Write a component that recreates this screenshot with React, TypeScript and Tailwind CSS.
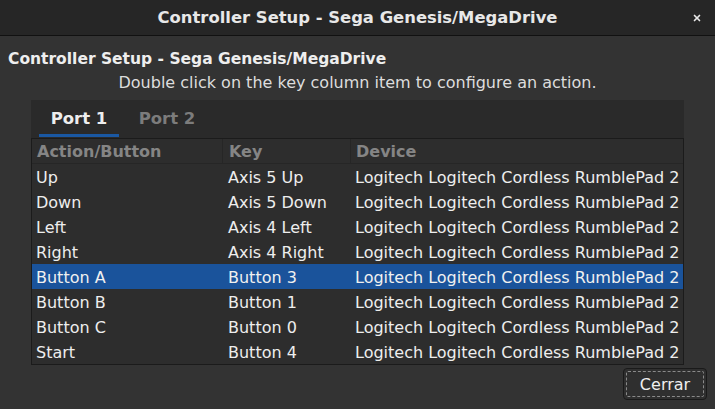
import { X } from 'lucide-react';

const rows = [
    ['Up', 'Axis 5 Up'],
    ['Down', 'Axis 5 Down'],
    ['Left', 'Axis 4 Left'],
    ['Right', 'Axis 4 Right'],
    ['Button A', 'Button 3'],
    ['Button B', 'Button 1'],
    ['Button C', 'Button 0'],
    ['Start', 'Button 4'],
];

const device = 'Logitech Logitech Cordless RumblePad 2';

export default function App() {
    return (
        <div
            className="w-[715px] h-[409px] overflow-hidden flex flex-col bg-[#333333] text-[#eeeeee]"
            style={{ fontFamily: '"DejaVu Sans", sans-serif' }}
        >
            {/* Window title bar */}
            <header className="relative h-[36px] shrink-0 flex items-center justify-center bg-[#262626] border-b border-[#111111]">
                <span className="text-[16.4px] font-bold text-[#e8e8e8] pt-[1px]">
                    Controller Setup - Sega Genesis/MegaDrive
                </span>
                <X className="absolute right-[13px] top-[13px] w-[10px] h-[10px] text-[#e8e8e8]" strokeWidth={4} />
            </header>

            <div className="flex flex-col flex-1">
                <h1 className="pl-[8px] pt-[13px] text-[15.5px] leading-[20px] font-bold">
                    Controller Setup - Sega Genesis/MegaDrive
                </h1>
                <p className="text-center pt-[4px] text-[16px] leading-[20px] text-[#dddddd]">
                    Double click on the key column item to configure an action.
                </p>

                {/* Tab pane */}
                <div className="ml-[31px] w-[653px] mt-[7px] bg-[#2a2a2a]">
                    <div className="flex h-[38px] items-stretch pl-[8px]">
                        <div className="relative w-[80px] flex items-center justify-center text-[16.5px] font-bold text-[#eeeeee]">
                            Port 1
                            <div className="absolute left-0 right-0 bottom-[1px] h-[3px] bg-[#1a58a3]" />
                        </div>
                        <div className="w-[96px] flex items-center justify-center text-[16.5px] font-bold text-[#7c7c7c]">
                            Port 2
                        </div>
                    </div>

                    {/* Table */}
                    <div className="border border-[#1b1b1b] bg-[#2d2d2d]">
                        <div className="grid grid-cols-[191px_128px_1fr] h-[25px] border-b border-[#262626] text-[16px] font-bold text-[#858585]">
                            <div className="pl-[5px] pt-[1px] flex items-center border-r border-[#262626]">Action/Button</div>
                            <div className="pl-[6px] pt-[1px] flex items-center border-r border-[#262626]">Key</div>
                            <div className="pl-[5px] pt-[1px] flex items-center">Device</div>
                        </div>
                        {rows.map(([action, key]) => (
                            <div
                                key={action}
                                className={`grid grid-cols-[191px_128px_1fr] h-[25px] pt-[2px] items-center text-[16px] whitespace-nowrap ${
                                    action === 'Button A' ? 'bg-[#1a539b] text-[#f0f0f0]' : 'text-[#eeeeee]'
                                }`}
                            >
                                <div className="pl-[4px]">{action}</div>
                                <div className="pl-[5px]">{key}</div>
                                <div className="pl-[4px]">{device}</div>
                            </div>
                        ))}
                    </div>
                </div>

                <div className="flex justify-end pr-[8px] pt-[3px]">
                    <button className="w-[84px] h-[32px] rounded-[4px] border border-[#1a1a1a] bg-[#2f2f2f] p-[2px]">
                        <span className="flex w-full h-full pt-[1px] items-center justify-center rounded-[2px] border border-dashed border-[#8a8a8a] text-[16px] text-[#eeeeee]">
                            Cerrar
                        </span>
                    </button>
                </div>
            </div>
        </div>
    );
}
